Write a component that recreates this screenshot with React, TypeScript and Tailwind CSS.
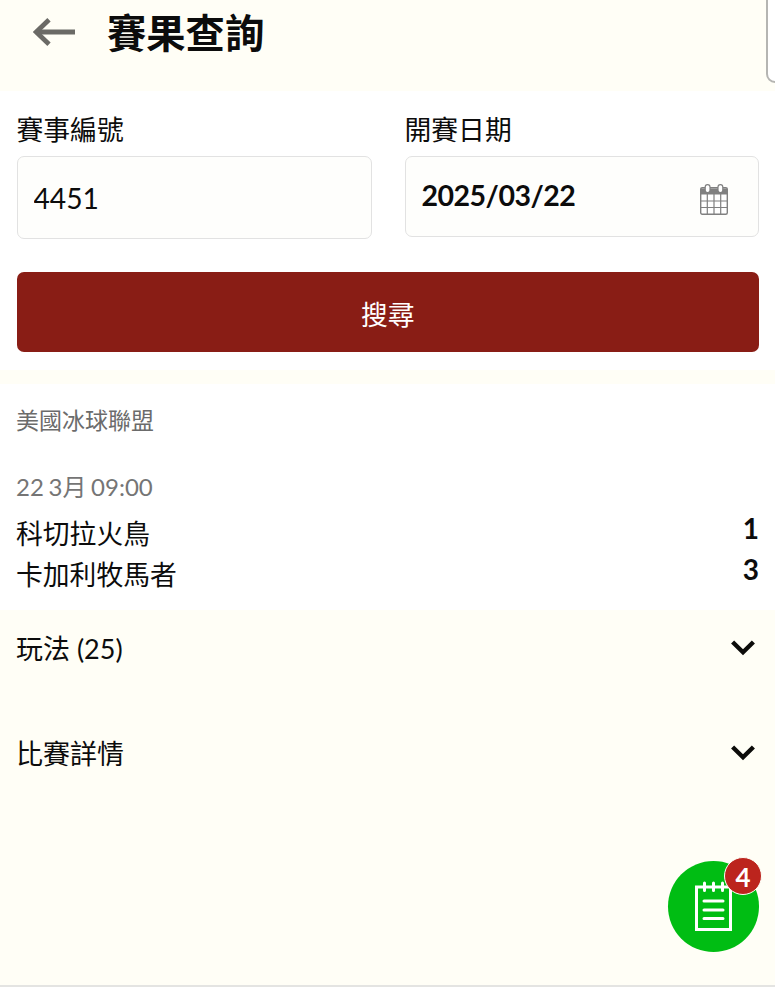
import { useState } from 'react';

interface Team {
  name: string;
  score: number;
}

const teams: Team[] = [
  { name: '科切拉火鳥', score: 1 },
  { name: '卡加利牧馬者', score: 3 },
];

const sections = ['玩法 (25)', '比賽詳情'];

function BackIcon() {
  return (
    <svg width="42" height="28" viewBox="0 0 42 28" fill="none" stroke="#6b6a66" strokeWidth="4.8">
      <path d="M42 14H4" />
      <path d="M16 1.8L3.2 14L16 26.2" />
    </svg>
  );
}

function CalendarIcon() {
  return (
    <svg width="28" height="31" viewBox="0 0 28 31" fill="none">
      <rect x="0.7" y="3.7" width="26.6" height="26.6" rx="1.5" fill="#fff" stroke="#808080" strokeWidth="1.4" />
      <path d="M0.7 4.5H27.3V10.5H0.7Z" fill="#808080" />
      <path d="M7.3 10V30M14 10V30M20.7 10V30M1 17H27M1 23.5H27" stroke="#808080" strokeWidth="1.2" />
      <rect x="5.2" y="0.6" width="4.8" height="8" rx="2.3" fill="#fff" stroke="#808080" strokeWidth="1.2" />
      <rect x="18" y="0.6" width="4.8" height="8" rx="2.3" fill="#fff" stroke="#808080" strokeWidth="1.2" />
    </svg>
  );
}

function ChevronIcon() {
  return (
    <svg width="24" height="16" viewBox="0 0 24 16" fill="none" stroke="#0c0c0a" strokeWidth="4.4">
      <path d="M1.6 2L12 12.2L22.4 2" />
    </svg>
  );
}

function BetSlipIcon() {
  return (
    <svg width="37" height="50" viewBox="0 0 37 50" fill="none" stroke="#fff" strokeWidth="3">
      <rect x="1.5" y="6" width="34" height="42.5" />
      <path d="M9.5 2V9.5M18.5 2V9.5M27.5 2V9.5" strokeLinecap="round" />
      <path d="M9 20H28M9 29H28M9 37.5H28" strokeLinecap="round" />
    </svg>
  );
}

export default function App() {
  const [matchNo, setMatchNo] = useState('4451');

  return (
    <div className="relative flex h-[1000px] w-[775px] flex-col overflow-hidden bg-[#fffef6] font-['Lato','Noto_Sans_CJK_TC',sans-serif] text-[26.8px] text-[#0c0c0c]">
      <header className="flex h-[91px] shrink-0 items-start pl-[33px]">
        <button className="mt-[18px]">
          <BackIcon />
        </button>
        <h1 className="ml-8 mt-[9px] text-[39.3px] leading-[48px] font-bold">賽果查詢</h1>
      </header>
      <div className="absolute -top-4 left-[766px] h-[99px] w-10 rounded-[9px] border-2 border-[#b5b5b2] bg-white" />

      <section className="h-[279px] shrink-0 bg-white px-[16.5px] pt-[19px]">
        <div className="flex gap-[33px]">
          <label className="block w-[355px]">
            <span className="block h-[46px] leading-[40px]">賽事編號</span>
            <input
              value={matchNo}
              onChange={(e) => setMatchNo(e.target.value)}
              className="block h-[83px] w-full rounded-[7px] border border-[#e2e2e2] bg-[#fefefc] px-4 text-[28.2px] outline-none"
            />
          </label>
          <div className="w-[354px]">
            <span className="block h-[46px] leading-[40px]">開賽日期</span>
            <div className="flex h-[81px] items-center justify-between rounded-[7px] border border-[#e2e2e2] bg-[#fefefc] pl-4 pr-[29.5px] text-[28.5px] font-bold tracking-[-0.5px]">
              <span className="-mt-0.5">2025/03/22</span>
              <span className="mt-[5px]">
                <CalendarIcon />
              </span>
            </div>
          </div>
        </div>
        <button className="mt-[33px] block h-20 w-[742.5px] rounded-[7px] bg-[#891d15] pt-[7px] text-white">搜尋</button>
      </section>

      <section className="mt-[14px] h-[226px] shrink-0 bg-white px-4 pt-[17px]">
        <div className="text-[23px] leading-[38px] text-[#6b6b6b]">美國冰球聯盟</div>
        <div className="mt-[29px] text-[24px] leading-[38px] text-[#757575] [word-spacing:-1.5px]">22 3月 09:00</div>
        <div className="mt-[8px]">
          {teams.map((team) => (
            <div key={team.name} className="flex h-[41px] justify-between leading-[41px]">
              <span>{team.name}</span>
              <span className="-mt-[6px] text-[28px] font-bold">{team.score}</span>
            </div>
          ))}
        </div>
      </section>

      <section className="h-[375px] shrink-0 pl-4 pr-5">
        {sections.map((title) => (
          <button key={title} className="flex h-[105px] w-full items-start justify-between pt-[19px]">
            <span className="text-[27px] leading-[40px]">{title}</span>
            <span className="mt-[11px]">
              <ChevronIcon />
            </span>
          </button>
        ))}
      </section>
      <footer className="flex-1 border-t-2 border-[#e4e4e2] bg-white" />

      <button className="absolute left-[668px] top-[861px] flex size-[91px] items-center justify-center rounded-full bg-[#00bd13] pb-[2px]">
        <BetSlipIcon />
        <span className="absolute -top-[4px] left-[56px] flex size-[38px] items-center justify-center rounded-full border border-[#fffef6] bg-[#bc241d] pt-0.5 text-[26px] leading-none font-bold text-white">
          4
        </span>
      </button>
    </div>
  );
}
